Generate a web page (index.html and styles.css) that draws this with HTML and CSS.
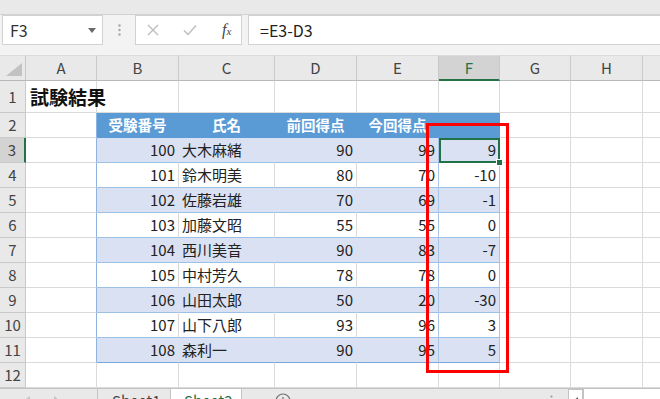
FILE: index.html
```html
<!DOCTYPE html>
<html lang="ja">
<head>
    <meta charset="UTF-8">
    <meta name="viewport" content="width=device-width, initial-scale=1.0">
    <title>試験結果 - Sheet2</title>
    <link rel="stylesheet" href="styles.css">
</head>
<body>
<div class="top-strip"></div>

<div class="formula-bar">
    <div class="name-box">
        <span>F3</span>
        <svg class="caret" width="8" height="5" viewBox="0 0 8 5"><polygon points="0,0 8,0 4,5" fill="#6a6a6a"/></svg>
    </div>
    <div class="bar-dots">
        <svg width="3" height="12" viewBox="0 0 3 12"><circle cx="1.5" cy="1.5" r="1.2" fill="#a8a8a8"/><circle cx="1.5" cy="6" r="1.2" fill="#a8a8a8"/><circle cx="1.5" cy="10.5" r="1.2" fill="#a8a8a8"/></svg>
    </div>
    <div class="fx-box">
        <svg class="btn" width="12" height="12" viewBox="0 0 12 12"><path d="M1 1 L11 11 M11 1 L1 11" stroke="#bdbdbd" stroke-width="1.4" fill="none"/></svg>
        <svg class="btn" width="14" height="12" viewBox="0 0 14 12"><path d="M1 6.5 L5 10.5 L13 1.5" stroke="#bdbdbd" stroke-width="1.5" fill="none"/></svg>
        <span class="fx">f<span class="fx-sub">x</span></span>
    </div>
    <div class="formula">=E3-D3</div>
</div>

<div class="sheet">
    <table class="grid">
        <colgroup>
            <col style="width:26px"><col style="width:71px"><col style="width:82px"><col style="width:96px">
            <col style="width:82px"><col style="width:82px"><col style="width:61px"><col style="width:71px">
            <col style="width:72px"><col style="width:40px">
        </colgroup>
        <tr class="col-head">
            <th class="corner"><svg width="26" height="24" viewBox="0 0 26 24"><polygon points="6,20 22,20 22,7" fill="#c2c2c2"/></svg></th>
            <th>A</th><th>B</th><th>C</th><th>D</th><th>E</th><th class="cur">F</th><th>G</th><th>H</th><th></th>
        </tr>
        <tr class="r-title">
            <th>1</th><td class="title">試験結果</td><td></td><td></td><td></td><td></td><td></td><td></td><td></td><td></td>
        </tr>
        <tr class="head">
            <th>2</th><td class="edge"></td>
            <td class="t">受験番号</td><td class="t">氏名</td><td class="t">前回得点</td><td class="t">今回得点</td><td class="t"></td>
            <td></td><td></td><td></td>
        </tr>
        <tr class="band">
            <th class="cur">3</th><td class="edge"></td>
            <td class="t num">100</td><td class="t name">大木麻緒</td><td class="t num">90</td><td class="t num e">99</td>
            <td class="t num f active">9<span class="handle"></span></td>
            <td></td><td></td><td></td>
        </tr>
        <tr class="plain">
            <th>4</th><td class="edge"></td>
            <td class="t num">101</td><td class="t name">鈴木明美</td><td class="t num">80</td><td class="t num e">70</td><td class="t num f">-10</td>
            <td></td><td></td><td></td>
        </tr>
        <tr class="band">
            <th>5</th><td class="edge"></td>
            <td class="t num">102</td><td class="t name">佐藤岩雄</td><td class="t num">70</td><td class="t num e">69</td><td class="t num f">-1</td>
            <td></td><td></td><td></td>
        </tr>
        <tr class="plain">
            <th>6</th><td class="edge"></td>
            <td class="t num">103</td><td class="t name">加藤文昭</td><td class="t num">55</td><td class="t num e">55</td><td class="t num f">0</td>
            <td></td><td></td><td></td>
        </tr>
        <tr class="band">
            <th>7</th><td class="edge"></td>
            <td class="t num">104</td><td class="t name">西川美音</td><td class="t num">90</td><td class="t num e">83</td><td class="t num f">-7</td>
            <td></td><td></td><td></td>
        </tr>
        <tr class="plain">
            <th>8</th><td class="edge"></td>
            <td class="t num">105</td><td class="t name">中村芳久</td><td class="t num">78</td><td class="t num e">78</td><td class="t num f">0</td>
            <td></td><td></td><td></td>
        </tr>
        <tr class="band">
            <th>9</th><td class="edge"></td>
            <td class="t num">106</td><td class="t name">山田太郎</td><td class="t num">50</td><td class="t num e">20</td><td class="t num f">-30</td>
            <td></td><td></td><td></td>
        </tr>
        <tr class="plain">
            <th>10</th><td class="edge"></td>
            <td class="t num">107</td><td class="t name">山下八郎</td><td class="t num">93</td><td class="t num e">96</td><td class="t num f">3</td>
            <td></td><td></td><td></td>
        </tr>
        <tr class="band last">
            <th>11</th><td class="edge"></td>
            <td class="t num">108</td><td class="t name">森利一</td><td class="t num">90</td><td class="t num e">95</td><td class="t num f">5</td>
            <td></td><td></td><td></td>
        </tr>
        <tr>
            <th>12</th><td></td><td></td><td></td><td></td><td></td><td></td><td></td><td></td><td></td>
        </tr>
    </table>
    <div class="highlight"></div>
</div>

<div class="tabs">
    <div class="tab-nav">
        <svg width="6" height="9" viewBox="0 0 6 9"><polygon points="6,0 6,9 0,4.5" fill="#c4c4c4"/></svg>
        <svg width="6" height="9" viewBox="0 0 6 9"><polygon points="0,0 0,9 6,4.5" fill="#c4c4c4"/></svg>
    </div>
    <div class="tab">Sheet1</div>
    <div class="tab active">Sheet2</div>
    <div class="tab-add">
        <svg width="16" height="16" viewBox="0 0 16 16"><circle cx="8" cy="8" r="7" stroke="#6f6f6f" stroke-width="1.2" fill="none"/><path d="M8 4 V12 M4 8 H12" stroke="#6f6f6f" stroke-width="1.2"/></svg>
    </div>
    <div class="tab-space"></div>
    <div class="tab-dots">
        <svg width="3" height="12" viewBox="0 0 3 12"><circle cx="1.5" cy="1.5" r="1.1" fill="#9a9a9a"/><circle cx="1.5" cy="6" r="1.1" fill="#9a9a9a"/><circle cx="1.5" cy="10.5" r="1.1" fill="#9a9a9a"/></svg>
    </div>
    <div class="scroll-btn">
        <svg width="5" height="8" viewBox="0 0 5 8"><polygon points="5,0 5,8 0,4" fill="#606060"/></svg>
    </div>
    <div class="scroll-track"></div>
</div>
</body>
</html>
```

FILE: styles.css
```css
* {
    box-sizing: border-box;
}
body {
    margin: 0;
    height: 399px;
    overflow: hidden;
    background-color: #f3f3f3;
    font-family: "Noto Sans CJK JP", "Noto Sans", sans-serif;
    color: #222;
}

/* ribbon edge + formula bar */
.top-strip {
    height: 15px;
    background-color: #e9e9e9;
    border-bottom: 1px solid #d2d2d2;
}
.formula-bar {
    display: flex;
    height: 30px;
    margin-bottom: 10px;
    padding-left: 2px;
}
.name-box, .fx-box, .formula {
    background-color: #fff;
    border: 1px solid #d2d2d2;
}
.name-box {
    width: 101px;
    display: flex;
    align-items: center;
    justify-content: space-between;
    padding: 0 6px 0 7px;
    font-size: 16px;
    color: #333;
}
.bar-dots {
    width: 32px;
    display: flex;
    align-items: center;
    justify-content: center;
}
.fx-box {
    width: 107px;
    display: flex;
    align-items: center;
    padding-left: 11px;
    gap: 24px;
}
.fx {
    font-family: "Liberation Serif", serif;
    font-style: italic;
    font-size: 16px;
    color: #444;
    margin-left: 1px;
}
.fx-sub {
    font-size: 11px;
}
.formula {
    flex: 1;
    margin-left: 6px;
    margin-right: -2px;
    padding-left: 11px;
    display: flex;
    align-items: center;
    font-size: 16px;
    color: #222;
}

/* sheet grid */
.sheet {
    position: relative;
}
.grid {
    border-collapse: separate;
    border-spacing: 0;
    table-layout: fixed;
    width: 683px;
    background-color: #fff;
}
.grid th, .grid td {
    height: 25px;
    padding: 0 3px;
    border-right: 1px solid #dadada;
    border-bottom: 1px solid #dadada;
    white-space: nowrap;
    overflow: hidden;
    font-size: 15px;
    line-height: 20px;
    vertical-align: middle;
}
.grid th {
    background-color: #e9e9e9;
    border-right-color: #c9c9c9;
    border-bottom-color: #c9c9c9;
    font-weight: normal;
    color: #444;
    text-align: center;
    padding: 0;
}
.col-head th {
    height: 24px;
    border-top: 1px solid #dcdcdc;
    border-bottom-color: #b8b8b8;
}
.corner svg {
    display: block;
}
.grid th.cur {
    background-color: #d3d3d3;
    color: #217346;
}
.col-head th.cur {
    border-bottom: 2px solid #217346;
}
tr.band th.cur {
    border-right: 2px solid #217346;
    color: #444;
}
.r-title th, .r-title td {
    height: 32px;
}
.grid td.title {
    font-size: 19px;
    font-weight: bold;
    color: #111;
    padding-left: 4px;
    overflow: visible;
}

/* table B2:F11 */
.grid td.edge {
    border-right-color: #8db3e2;
}
.head td.t {
    background-color: #5b9bd5;
    border-right-color: #5b9bd5;
    border-bottom-color: #5b9bd5;
    color: #fff;
    font-weight: bold;
    font-size: 14.5px;
    text-align: center;
}
.band td.t {
    background-color: #d9e1f2;
    border-right-color: #d9e1f2;
    border-bottom-color: #9bc2e6;
}
.plain td.t {
    border-bottom-color: #9bc2e6;
}
.grid td.e, .grid td.f {
    border-right-color: #a9c4e4;
}
.last td.t {
    border-bottom-color: #7aa6da;
}
.num {
    text-align: right;
}
.name {
    text-align: left;
}
.grid td.active {
    position: relative;
    overflow: visible;
    outline: 2px solid #217346;
    outline-offset: -2px;
}
.handle {
    position: absolute;
    right: -4px;
    bottom: -4px;
    width: 7px;
    height: 7px;
    background-color: #217346;
    border: 1px solid #fff;
}
.highlight {
    position: absolute;
    left: 426px;
    top: 68px;
    width: 83px;
    height: 250px;
    border: 3px solid #ff0000;
}

/* sheet tabs */
.tabs {
    display: flex;
    height: 24px;
    background-color: #e9e9e9;
    border-top: 1px solid #c3c3c3;
    font-size: 15px;
}
.tab-nav {
    width: 97px;
    display: flex;
    align-items: center;
    padding-left: 24px;
    gap: 24px;
}
.tab {
    width: 73px;
    border-left: 1px solid #c3c3c3;
    padding-left: 14px;
    line-height: 23px;
    color: #444;
}
.tab.active {
    width: 72px;
    background-color: #fff;
    border-right: 1px solid #c3c3c3;
    padding-left: 13px;
    color: #217346;
}
.tab-add {
    padding-left: 33px;
    display: flex;
    align-items: center;
}
.tab-space {
    flex: 1;
}
.tab-dots {
    width: 34px;
    display: flex;
    align-items: center;
    justify-content: center;
}
.scroll-btn {
    width: 15px;
    border: 1px solid #c3c3c3;
    background-color: #fff;
    display: flex;
    align-items: center;
    justify-content: center;
}
.scroll-track {
    width: 77px;
    background-color: #fff;
    border-left: 1px solid #c3c3c3;
}
```
